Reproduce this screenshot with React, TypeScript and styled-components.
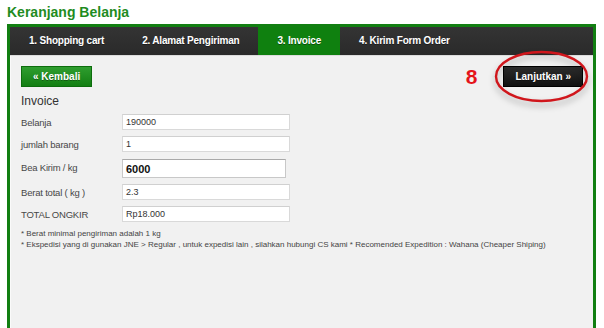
import React from "react";
import styled, { createGlobalStyle } from "styled-components";

const GlobalStyle = createGlobalStyle`
  html, body { margin: 0; padding: 0; background: #ffffff; }
  body { font-family: "Liberation Sans", Arial, sans-serif; overflow: hidden; }
`;

const Page = styled.div`
  padding: 4px 8px 0 7px;
  width: 604px;
  height: 328px;
  box-sizing: border-box;
  overflow: hidden;
`;

const Title = styled.h1`
  margin: 0 0 3px 0;
  font-size: 14px;
  line-height: 17px;
  font-weight: bold;
  color: #1f8c1f;
`;

const Box = styled.div`
  width: 589px;
  box-sizing: border-box;
  border: 3px solid #127f12;
  border-bottom: none;
  background: #fafafa;
`;

const TabBar = styled.div`
  display: flex;
  height: 28px;
  background: linear-gradient(#343434, #2a2a2a);
  border-bottom: 1px solid #dcdcdc;
`;

const Tab = styled.div<{ $active?: boolean }>`
  padding: 0 19px;
  line-height: 28px;
  font-size: 10px;
  font-weight: bold;
  letter-spacing: -0.2px;
  color: #ffffff;
  text-shadow: 0 1px 0 rgba(0, 0, 0, 0.4);
  background: ${(p) => (p.$active ? "#0f800f" : "transparent")};
  white-space: nowrap;
`;

const Body = styled.div`
  background: #f1f1f1;
  margin-left: 1px;
  padding: 10px 10px 0 10px;
  height: 280px;
  box-sizing: border-box;
`;

const TopRow = styled.div`
  display: flex;
  justify-content: space-between;
  align-items: center;
  height: 21px;
`;

const Button = styled.div<{ $variant: "green" | "dark" }>`
  height: 21px;
  box-sizing: border-box;
  padding: 0 11px;
  display: flex;
  align-items: center;
  font-size: 10px;
  font-weight: bold;
  color: #ffffff;
  white-space: nowrap;
  text-shadow: 0 1px 0 rgba(0, 0, 0, 0.35);
  background: ${(p) =>
    p.$variant === "green"
      ? "linear-gradient(#2f9d2f, #137f13)"
      : "linear-gradient(#2c2c2c, #111111)"};
  border: 1px solid ${(p) => (p.$variant === "green" ? "#0d6d0d" : "#000000")};
`;

const RightGroup = styled.div`
  display: flex;
  align-items: center;
  gap: 26px;
`;

const StepNumber = styled.span`
  color: #e5141b;
  font-size: 21px;
  font-weight: bold;
  line-height: 21px;
`;

const NextWrap = styled.div`
  position: relative;
`;

const Ring = styled.svg`
  position: absolute;
  left: -9px;
  top: -16px;
  width: 95px;
  height: 53px;
  overflow: visible;
  filter: drop-shadow(0 4px 3px rgba(0, 0, 0, 0.3));
  pointer-events: none;
`;

const Heading = styled.div`
  margin-top: 7px;
  font-size: 12px;
  line-height: 15px;
  color: #333333;
`;

const Form = styled.div`
  margin-top: 5px;
  display: flex;
  flex-direction: column;
`;

const Row = styled.div<{ $gap: number }>`
  display: grid;
  grid-template-columns: 101px auto;
  margin-bottom: ${(p) => p.$gap}px;
`;

const Label = styled.div`
  padding-top: 3px;
  font-size: 9.5px;
  letter-spacing: -0.2px;
  line-height: 11px;
  color: #474747;
`;

const Field = styled.div<{ $big?: boolean }>`
  box-sizing: border-box;
  width: ${(p) => (p.$big ? 164 : 168)}px;
  height: ${(p) => (p.$big ? 19 : 16)}px;
  background: #ffffff;
  border: 1px solid ${(p) => (p.$big ? "#c8c8c8" : "#d9d9d9")};
  border-top-color: ${(p) => (p.$big ? "#a9a9a9" : "#d0d0d0")};
  padding: 0 3px;
  display: flex;
  align-items: center;
  font-size: ${(p) => (p.$big ? 11 : 9)}px;
  font-weight: ${(p) => (p.$big ? "bold" : "normal")};
  color: ${(p) => (p.$big ? "#111111" : "#333333")};
`;

const Notes = styled.div`
  margin-top: 1px;
  font-size: 8px;
  line-height: 10.5px;
  color: #444444;
`;

const rows = [
  { label: "Belanja", value: "190000", gap: 6 },
  { label: "jumlah barang", value: "1", gap: 7 },
  { label: "Bea Kirim / kg", value: "6000", gap: 6, big: true },
  { label: "Berat total ( kg )", value: "2.3", gap: 6 },
  { label: "TOTAL ONGKIR", value: "Rp18.000", gap: 6 },
];

export default function App() {
  return (
    <>
      <GlobalStyle />
      <Page>
        <Title>Keranjang Belanja</Title>
        <Box>
          <TabBar>
            <Tab>1. Shopping cart</Tab>
            <Tab>2. Alamat Pengiriman</Tab>
            <Tab $active>3. Invoice</Tab>
            <Tab>4. Kirim Form Order</Tab>
          </TabBar>
          <Body>
            <TopRow>
              <Button $variant="green">« Kembali</Button>
              <RightGroup>
                <StepNumber>8</StepNumber>
                <NextWrap>
                  <Button $variant="dark">Lanjutkan »</Button>
                  <Ring viewBox="0 0 95 53">
                    <ellipse
                      cx="47.5"
                      cy="26.5"
                      rx="45.5"
                      ry="24.5"
                      fill="none"
                      stroke="#d0161c"
                      strokeWidth="2.4"
                    />
                  </Ring>
                </NextWrap>
              </RightGroup>
            </TopRow>
            <Heading>Invoice</Heading>
            <Form>
              {rows.map((r) => (
                <Row key={r.label} $gap={r.gap}>
                  <Label>{r.label}</Label>
                  <Field $big={r.big}>{r.value}</Field>
                </Row>
              ))}
            </Form>
            <Notes>
              <div>* Berat minimal pengiriman adalah 1 kg</div>
              <div>
                * Ekspedisi yang di gunakan JNE &gt; Regular , untuk expedisi lain , silahkan hubungi CS kami *
                Recomended Expedition : Wahana (Cheaper Shiping)
              </div>
            </Notes>
          </Body>
        </Box>
      </Page>
    </>
  );
}
